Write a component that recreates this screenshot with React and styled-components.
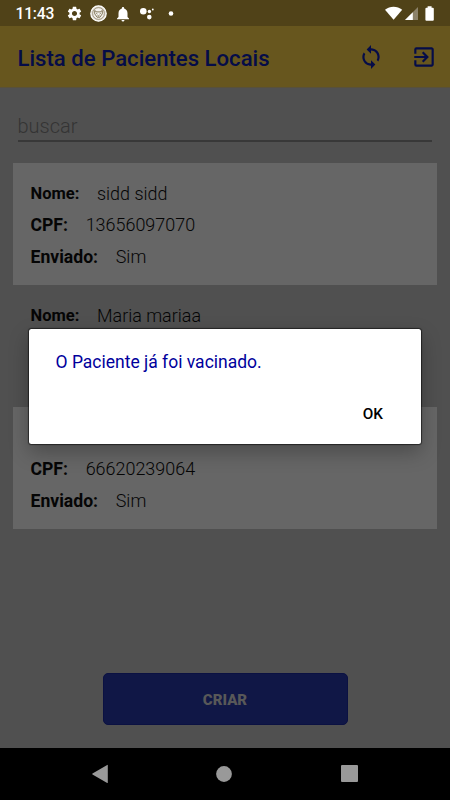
import React from "react";
import styled, { createGlobalStyle } from "styled-components";
import { MdSync, MdExitToApp, MdSettings, MdNotifications } from "react-icons/md";

const GlobalStyle = createGlobalStyle`
  * { box-sizing: border-box; }
  body { margin: 0; background: #000; font-family: Roboto, sans-serif; }
`;

const Screen = styled.div`
  position: relative;
  display: flex;
  flex-direction: column;
  width: 450px;
  height: 800px;
  overflow: hidden;
  background: #505050;
`;

const StatusBar = styled.div`
  display: flex;
  align-items: center;
  justify-content: space-between;
  flex: none;
  height: 26px;
  padding: 1px 14px 0 15.5px;
  background: #504218;
  color: #fff;
`;

const StatusLeft = styled.div`
  display: flex;
  align-items: center;
`;

const Clock = styled.span`
  width: 50.5px;
  padding-top: 1px;
  font-size: 15.6px;
  font-weight: 500;
  line-height: 24px;
  letter-spacing: -0.2px;
`;

const StatusIcon = styled.span`
  display: flex;
  width: ${(p) => p.$width}px;
  justify-content: center;
  svg { flex: none; }
`;

const StatusRight = styled.div`
  display: flex;
  align-items: center;
  svg { display: block; }
`;

const Header = styled.header`
  display: flex;
  align-items: center;
  flex: none;
  height: 62px;
  padding: 1px 13.5px 0 17.5px;
  background: #67561e;
  border-bottom: 1px solid #58503a;
  color: #050c48;
`;

const Title = styled.h1`
  flex: 1;
  margin: 0;
  padding-top: 2px;
  font-size: 22.15px;
  font-weight: 500;
  line-height: 30px;
  white-space: nowrap;
`;

const HeaderActions = styled.div`
  display: flex;
  gap: 27px;
  padding-bottom: 1px;
  svg { display: block; }
`;

const Content = styled.main`
  flex: 1;
  display: flex;
  flex-direction: column;
  min-height: 0;
  padding: 0 13px;
`;

const Search = styled.div`
  flex: none;
  height: 54px;
  margin: 0 5px 21px 4.5px;
  padding-top: 23px;
  border-bottom: 2px solid #383838;
  color: #343434;
  font-size: 20px;
  font-weight: 300;
  line-height: 30px;
`;

const Card = styled.article`
  flex: none;
  height: 122px;
  padding: 14px 17.5px 0;
  background: ${(p) => (p.$shaded ? "transparent" : "#666")};
`;

const Field = styled.div`
  display: flex;
  align-items: center;
  gap: 17.7px;
  height: 32px;
  color: #050505;
`;

const Label = styled.span`
  font-size: ${(p) => (p.$small ? 16.5 : 17.6)}px;
  font-weight: 700;
  line-height: 24px;
  margin-top: ${(p) => (p.$small ? 1 : -1)}px;
`;

const Value = styled.span`
  font-size: 17.95px;
  font-weight: 300;
  line-height: 24px;
  margin-top: ${(p) => (p.$low ? 2 : -1)}px;
`;

const CreateButton = styled.button`
  align-self: center;
  width: 245px;
  height: 52px;
  margin-top: auto;
  margin-bottom: 23px;
  padding: 2px 0 0;
  border: 1px solid #0b1142;
  border-radius: 5px;
  background: #101746;
  color: #585858;
  font: 900 15px Roboto, sans-serif;
`;

const NavBar = styled.nav`
  display: flex;
  align-items: center;
  justify-content: space-between;
  flex: none;
  height: 52px;
  padding: 0 92.5px 1px 90.5px;
  background: #000;
  svg { display: block; }
`;

const Dialog = styled.div`
  position: absolute;
  left: 29px;
  top: 329px;
  display: flex;
  flex-direction: column;
  justify-content: space-between;
  width: 392px;
  height: 114.5px;
  padding: 21px 26.5px 18px;
  border-radius: 2.5px;
  background: #fff;
  box-shadow: 0 0 1px 1px rgba(0, 0, 0, 0.55), 0 8px 20px rgba(0, 0, 0, 0.28);
`;

const Message = styled.p`
  margin: 0;
  color: #00009c;
  font-size: 17.5px;
  font-weight: 400;
  line-height: 24px;
  white-space: nowrap;
`;

const OkButton = styled.button`
  align-self: flex-end;
  margin-right: 11.5px;
  padding: 0;
  border: 0;
  background: none;
  color: #000;
  font: 500 15.3px/24px Roboto, sans-serif;
`;

const patients = [
  { name: "sidd sidd", cpf: "13656097070", sent: "Sim" },
  { name: "Maria mariaa" },
  { cpf: "66620239064", sent: "Sim" },
];

const fields = [
  { key: "name", label: "Nome:" },
  { key: "cpf", label: "CPF:" },
  { key: "sent", label: "Enviado:" },
];

function BadgeIcon() {
  return (
    <svg width="17" height="17" viewBox="0 0 17 17" fill="none">
      <circle cx="8.5" cy="8.5" r="7.7" fill="#d8d3c8" stroke="#fff" strokeWidth="1.2" />
      <circle cx="8.5" cy="8.5" r="5.8" fill="#f4f2ee" stroke="#75684a" strokeWidth="0.6" />
      <path d="M4.7 5.6l2.1 1.3h3.4l2.1-1.3v3.2l-2.4 3.4H7.1L4.7 8.8z" stroke="#504218" strokeWidth="0.7" />
      <path d="M6.3 8.3l1 .6M10.7 8.3l-1 .6M7.6 10.3l.9.6.9-.6" stroke="#504218" strokeWidth="0.8" />
    </svg>
  );
}

function PatientCard({ patient, shaded }) {
  return (
    <Card $shaded={shaded}>
      {fields.map(({ key, label }) => (
        <Field key={key}>
          {patient[key] && (
            <>
              <Label $small={key === "name"}>{label}</Label>
              <Value $low={key === "name"}>{patient[key]}</Value>
            </>
          )}
        </Field>
      ))}
    </Card>
  );
}

export default function App() {
  return (
    <Screen>
      <GlobalStyle />
      <StatusBar>
        <StatusLeft>
          <Clock>11:43</Clock>
          <StatusIcon $width={16}><MdSettings size={17} /></StatusIcon>
          <StatusIcon $width={33}><BadgeIcon /></StatusIcon>
          <StatusIcon $width={15}><MdNotifications size={18} /></StatusIcon>
          <StatusIcon $width={34}>
            <svg width="16" height="14" viewBox="0 0 16 14" fill="#fff">
              <circle cx="4.3" cy="4.3" r="3.3" />
              <circle cx="10.3" cy="10.1" r="2.3" />
              <circle cx="10.4" cy="4.5" r="1.7" />
              <circle cx="13.8" cy="2.5" r="0.9" />
            </svg>
          </StatusIcon>
          <StatusIcon $width={13}>
            <svg width="6" height="6" viewBox="0 0 6 6" fill="#fff"><circle cx="3" cy="2.5" r="2.3" /></svg>
          </StatusIcon>
        </StatusLeft>
        <StatusRight>
          <svg width="51" height="18" viewBox="0 0 51 18" fill="#fff">
            <path d="M0 4.8C4.9.8 12.2.8 17.2 4.8L8.6 14.8z" />
            <path d="M33 2v13H20z" fill="#8c826a" />
            <path d="M27.8 7.2V15H20z" />
            <path d="M42.6 1.2h4v1.6h1.2q1 0 1 1v11q0 1-1 1h-6.4q-1 0-1-1v-11q0-1 1-1h1.2z" />
          </svg>
        </StatusRight>
      </StatusBar>
      <Header>
        <Title>Lista de Pacientes Locais</Title>
        <HeaderActions>
          <MdSync size={26} />
          <MdExitToApp size={26} />
        </HeaderActions>
      </Header>
      <Content>
        <Search>buscar</Search>
        {patients.map((patient, i) => (
          <PatientCard key={i} patient={patient} shaded={i % 2 === 1} />
        ))}
        <CreateButton>CRIAR</CreateButton>
      </Content>
      <NavBar>
        <svg width="17" height="20" viewBox="0 0 17 20" fill="#999">
          <path d="M16.8 1.2v17.4q0 .7-.6.3L1.5 10.5q-.6-.6 0-1L16.2.9q.6-.3.6.3z" />
        </svg>
        <svg width="16" height="16" viewBox="0 0 16 16" fill="#999"><circle cx="8" cy="8" r="7.9" /></svg>
        <svg width="17" height="17" viewBox="0 0 17 17" fill="#999"><rect width="17" height="17" rx="1" /></svg>
      </NavBar>
      <Dialog role="alertdialog">
        <Message>O Paciente já foi vacinado.</Message>
        <OkButton>OK</OkButton>
      </Dialog>
    </Screen>
  );
}
